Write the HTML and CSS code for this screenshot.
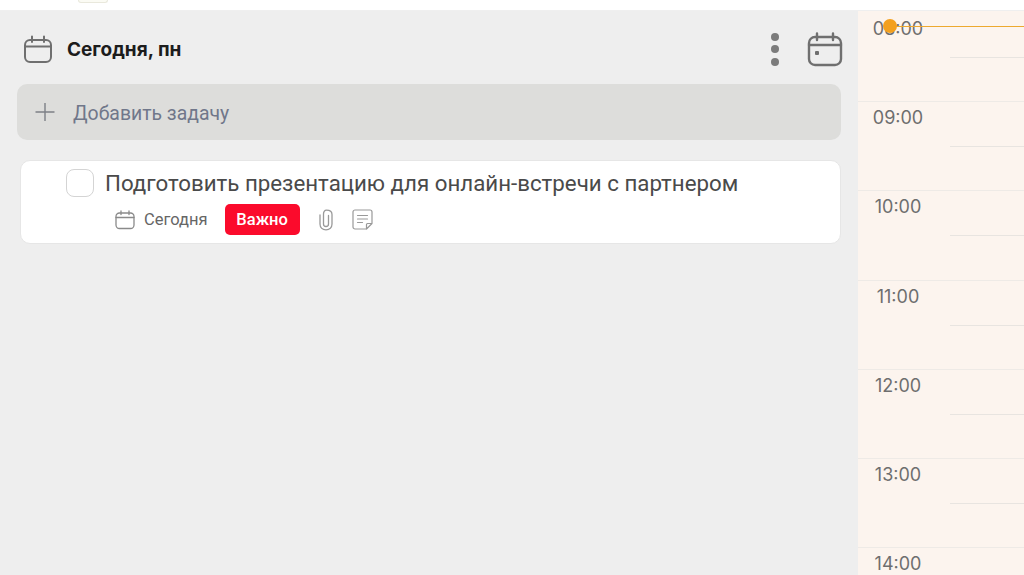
FILE: index.html
```html
<!DOCTYPE html>
<html lang="en">
<head>
  <meta charset="UTF-8">
  <title>Сегодня</title>
  <link rel="stylesheet" href="styles.css">
</head>
<body>
  <div class="topbar"><span class="top-tab"></span></div>
  <div class="main">
    <div class="tasks">
      <div class="tasks-head">
        <svg class="head-icon" width="30" height="30" viewBox="0 0 30 30" fill="none" stroke="#6f6f6f" stroke-width="2" stroke-linecap="round">
          <rect x="2" y="6" width="26" height="22" rx="5"/>
          <path d="M2 12.500H28M9 2.500V8M21 2.500V8"/>
        </svg>
        <h1>Сегодня, пн</h1>
        <div class="dots"><span></span><span></span><span></span></div>
        <svg class="day-icon" width="36" height="36" viewBox="0 0 36 36" fill="none" stroke="#6f6f6f" stroke-width="2.400" stroke-linecap="round">
          <rect x="2" y="5" width="32" height="28" rx="6"/>
          <path d="M2 13H34M10 1.500V8M26 1.500V8"/>
          <rect x="8" y="19" width="4" height="4" rx="1" fill="#6f6f6f" stroke="none"/>
        </svg>
      </div>

      <div class="add-task">
        <svg width="20" height="20" viewBox="0 0 20 20" stroke="#7d8087" stroke-width="1.400">
          <path d="M10 1V19M0.500 10H19.500"/>
        </svg>
        <span>Добавить задачу</span>
      </div>

      <div class="task">
        <div class="task-top">
          <span class="check"></span>
          <span class="task-title">Подготовить презентацию для онлайн-встречи с партнером</span>
        </div>
        <div class="task-meta">
          <svg width="20" height="20" viewBox="0 0 20 20" fill="none" stroke="#8a8a8a" stroke-width="1.300" stroke-linecap="round">
            <rect x="1" y="3" width="18" height="15.500" rx="3.500"/>
            <path d="M1 7.500H19M6 1V4.500M14 1V4.500"/>
          </svg>
          <span class="when">Сегодня</span>
          <span class="badge">Важно</span>
          <svg class="clip" width="16" height="22" viewBox="0 0 16 22" fill="none" stroke="#999" stroke-width="1.300" stroke-linecap="round">
            <path d="M10.500 6.500V15C10.500 16.500 9.500 17.500 8 17.500C6.500 17.500 5.500 16.500 5.500 15V5C5.500 2.800 6.500 1.200 8.500 1.200C11.500 1.200 14 2.800 14 5.500V15C14 18.500 11.500 20.800 8 20.800C4.500 20.800 2 18.500 2 15V6"/>
          </svg>
          <svg width="21" height="21" viewBox="0 0 21 21" fill="none" stroke="#999" stroke-width="1.200" stroke-linecap="round" stroke-linejoin="round">
            <path d="M14.500 20H3C2 20 1 19 1 18V3C1 2 2 1 3 1H18C19 1 20 2 20 3V14.500L14.500 20V15.500C14.500 15 15 14.500 15.500 14.500H20"/>
            <path d="M5.500 6.500H15.500M5.500 10H15.500M5.500 13.500H10.500"/>
          </svg>
        </div>
      </div>
    </div>

    <div class="calendar">
      <div class="now-line"></div>
      <div class="now-dot"></div>
      <div class="hour"><span class="time">08:00</span><span class="half"></span></div>
      <div class="hour"><span class="time">09:00</span><span class="half"></span></div>
      <div class="hour"><span class="time">10:00</span><span class="half"></span></div>
      <div class="hour"><span class="time">11:00</span><span class="half"></span></div>
      <div class="hour"><span class="time">12:00</span><span class="half"></span></div>
      <div class="hour"><span class="time">13:00</span><span class="half"></span></div>
      <div class="hour"><span class="time">14:00</span><span class="half"></span></div>
    </div>
  </div>
</body>
</html>
```

FILE: styles.css
```css
html, body {
  height: 100%;
}

body {
  margin: 0;
  overflow: hidden;
  display: flex;
  flex-direction: column;
  font-family: Roboto, "Liberation Sans", sans-serif;
  background-color: #fff;
}

.topbar {
  height: 11px;
  flex-shrink: 0;
  padding-left: 78px;
  background: #fff;
  border-bottom: 1px solid #efefef;
  box-sizing: border-box;
}

.top-tab {
  display: block;
  width: 30px;
  height: 3px;
  background: #fbfbf4;
  border: 1px solid #e9e8dc;
  border-top: 0;
  border-radius: 0 0 6px 6px;
  box-sizing: border-box;
}

.main {
  flex: 1;
  display: flex;
  min-height: 0;
}

.tasks {
  width: 858px;
  flex-shrink: 0;
  box-sizing: border-box;
  padding: 0 17px;
  background-color: #eeeeee;
}

.tasks-head {
  height: 73px;
  box-sizing: border-box;
  padding: 3px 0 0 6px;
  display: flex;
  align-items: center;
}

.head-icon {
  margin-right: 14px;
}

h1 {
  flex: 1;
  margin: 0;
  font-family: Inter, Roboto, sans-serif;
  font-size: 19px;
  font-weight: 700;
  color: #1c1c1c;
}

.dots {
  display: flex;
  flex-direction: column;
  gap: 4.500px;
  margin-right: 28px;
}

.dots span {
  width: 8px;
  height: 8px;
  border-radius: 50%;
  background: #7b7b7b;
}

.day-icon {
  margin: 2px -2px 0 0;
}

.add-task {
  height: 56px;
  display: flex;
  align-items: center;
  gap: 18px;
  padding-left: 18px;
  border-radius: 10px;
  background-color: #dddddb;
  font-size: 19.400px;
  color: #70778a;
}

.add-task span {
  padding-top: 2px;
}

.task {
  margin: 20px 0 0 3px;
  height: 84px;
  box-sizing: border-box;
  padding: 8px 0 0 45px;
  background: #fff;
  border: 1px solid #e6e6e6;
  border-radius: 10px;
}

.task-top {
  display: flex;
  align-items: center;
  gap: 11px;
}

.check {
  width: 28px;
  height: 28px;
  box-sizing: border-box;
  background: #fff;
  border: 1.500px solid #d4d4d4;
  border-radius: 8px;
}

.task-title {
  font-size: 22.300px;
  color: #4a4a4a;
}

.task-meta {
  display: flex;
  align-items: center;
  margin: 7px 0 0 49px;
}

.when {
  margin-left: 9px;
  font-size: 16.500px;
  color: #666;
}

.badge {
  margin-left: 17px;
  width: 75px;
  height: 31px;
  line-height: 31px;
  text-align: center;
  border-radius: 5px;
  background: #fb0b2c;
  color: #fff;
  font-size: 16.500px;
  font-weight: 500;
}

.clip {
  margin: 0 18px 0 18px;
}

.calendar {
  position: relative;
  flex: 1;
  padding-top: 2px;
  overflow: hidden;
  background-color: #fcf4ee;
}

.hour {
  position: relative;
  height: 89.200px;
  box-sizing: border-box;
  border-bottom: 1px solid #eeeae6;
}

.time {
  position: absolute;
  left: 0;
  width: 80px;
  top: 5px;
  text-align: center;
  font-family: Inter, Roboto, sans-serif;
  font-size: 18px;
  color: #6e6e6e;
}

.half {
  position: absolute;
  left: 92px;
  right: 0;
  top: 44px;
  border-top: 1px solid #e8e4e0;
}

.now-line {
  position: absolute;
  left: 32px;
  right: 0;
  top: 15px;
  border-top: 1px solid #eda92f;
  z-index: 1;
}

.now-dot {
  position: absolute;
  left: 25px;
  top: 8px;
  width: 14px;
  height: 14px;
  border-radius: 50%;
  background: #f3a01e;
  z-index: 1;
}
```
